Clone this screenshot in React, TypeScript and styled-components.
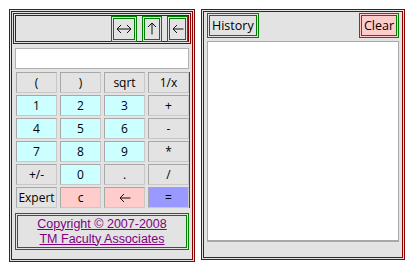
import React from 'react'
import styled, { createGlobalStyle } from 'styled-components'

const Global = createGlobalStyle`
    body {
        margin: 0;
        background: #fff;
        font-family: "Open Sans", "Liberation Sans", sans-serif;
    }
`

const Page = styled.div`
    display: flex;
    align-items: flex-start;
    gap: 6px;
    padding: 9px 0 0 9px;
`

const Panel = styled.div<{ $w: number; $h: number }>`
    width: ${p => p.$w}px;
    height: ${p => p.$h}px;
    box-sizing: border-box;
    border: 3px double #8b0000;
    background: #e3e3e3;
    display: flex;
    flex-direction: column;
`

const CalcPanel = styled(Panel)`
    padding: 1px;
`

const Toolbar = styled.div`
    height: 31px;
    box-sizing: border-box;
    border: 3px double #8b0000;
    display: flex;
    justify-content: flex-end;
    align-items: center;
    gap: 5px;
`

const ToolButton = styled.button<{ $w: number }>`
    width: ${p => p.$w}px;
    height: 26px;
    box-sizing: border-box;
    border: 3px double #008000;
    background: #e3e3e3;
    padding: 0;
    display: flex;
    align-items: center;
    justify-content: center;
    svg {
        display: block;
    }
`

const Display = styled.input`
    margin: 4px 2px 0;
    height: 21px;
    box-sizing: border-box;
    border: 1px solid #b0b0b0;
    outline: none;
    background: #fff;
`

const Keypad = styled.div`
    margin: 3px 1px 0 2px;
    padding: 0 2px 0 1px;
    border-right: 1px solid #1f5f1f;
    display: grid;
    grid-template-columns: repeat(4, 41px);
    grid-auto-rows: 21px;
    column-gap: 3px;
    row-gap: 2px;
`

const keyColours = {
    grey: '#e3e3e3',
    digit: '#ccffff',
    clear: '#ffcccc',
    equals: '#9999ff',
}

const Key = styled.button<{ $kind: keyof typeof keyColours }>`
    box-sizing: border-box;
    border: 1px solid #a8a8a8;
    border-right-color: #c8c8c8;
    border-bottom-color: #c8c8c8;
    background: ${p => keyColours[p.$kind]};
    font-family: "Open Sans", "Liberation Sans", sans-serif;
    font-size: 12px;
    color: #000;
    padding: 0;
    display: flex;
    align-items: center;
    justify-content: center;
`

const Copyright = styled.div`
    margin: 5px 2px 0;
    height: 37px;
    box-sizing: border-box;
    border: 3px double #008000;
    display: flex;
    flex-direction: column;
    align-items: center;
    justify-content: center;
    a {
        display: block;
        color: #800080;
        font-family: "Liberation Sans", sans-serif;
        font-size: 12.5px;
        line-height: 15px;
        height: 15px;
    }
`

const HistoryPanel = styled(Panel)`
    padding: 1px 3px 0 3px;
`

const HistoryBar = styled.div`
    display: flex;
    justify-content: space-between;
    height: 25px;
`

const BarButton = styled.button<{ $bg: string }>`
    box-sizing: border-box;
    height: 25px;
    border: 3px double #008000;
    background: ${p => p.$bg};
    font-family: "Open Sans", "Liberation Sans", sans-serif;
    font-size: 12.5px;
    color: #000;
    padding: 0 2px;
`

const HistoryList = styled.div`
    margin-top: 3px;
    height: 201px;
    box-sizing: border-box;
    border: 1px solid #a8a8a8;
    border-bottom-width: 2px;
    background: #fff;
`

const stroke = { stroke: '#111', strokeWidth: 1, fill: 'none' }

const WidenIcon = () => (
    <svg width="16" height="10" viewBox="0 0 16 10">
        <path d="M1 5H15M5 1L1 5L5 9M11 1L15 5L11 9" {...stroke} />
    </svg>
)

const UpIcon = () => (
    <svg width="10" height="13" viewBox="0 0 10 13">
        <path d="M5 1V12.5M1 5L5 1L9 5" {...stroke} />
    </svg>
)

const BackIcon = () => (
    <svg width="12" height="10" viewBox="0 0 12 10">
        <path d="M1 5H11.5M5 1L1 5L5 9" {...stroke} />
    </svg>
)

const keys: [string, keyof typeof keyColours][] = [
    ['(', 'grey'], [')', 'grey'], ['sqrt', 'grey'], ['1/x', 'grey'],
    ['1', 'digit'], ['2', 'digit'], ['3', 'digit'], ['+', 'grey'],
    ['4', 'digit'], ['5', 'digit'], ['6', 'digit'], ['-', 'grey'],
    ['7', 'digit'], ['8', 'digit'], ['9', 'digit'], ['*', 'grey'],
    ['+/-', 'grey'], ['0', 'digit'], ['.', 'grey'], ['/', 'grey'],
    ['Expert', 'grey'], ['c', 'clear'], ['back', 'clear'], ['=', 'equals'],
]

export default function App() {
    return (
        <>
            <Global />
            <Page>
                <CalcPanel $w={186} $h={253}>
                    <Toolbar>
                        <ToolButton $w={26}><WidenIcon /></ToolButton>
                        <ToolButton $w={20}><UpIcon /></ToolButton>
                        <ToolButton $w={21}><BackIcon /></ToolButton>
                    </Toolbar>
                    <Display readOnly />
                    <Keypad>
                        {keys.map(([label, kind]) => (
                            <Key key={label} $kind={kind}>
                                {label === 'back' ? <BackIcon /> : label}
                            </Key>
                        ))}
                    </Keypad>
                    <Copyright>
                        <a href="#">Copyright © 2007-2008</a>
                        <a href="#">TM Faculty Associates</a>
                    </Copyright>
                </CalcPanel>
                <HistoryPanel $w={204} $h={251}>
                    <HistoryBar>
                        <BarButton $bg="#e3e3e3">History</BarButton>
                        <BarButton $bg="#ffcccc">Clear</BarButton>
                    </HistoryBar>
                    <HistoryList />
                </HistoryPanel>
            </Page>
        </>
    )
}
